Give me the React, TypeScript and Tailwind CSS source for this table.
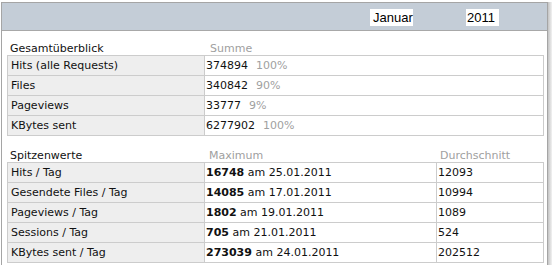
const font = { fontFamily: '"DejaVu Sans", Verdana, sans-serif' }

const gesamt = [
  { label: 'Hits (alle Requests)', value: '374894', pct: '100%' },
  { label: 'Files', value: '340842', pct: '90%' },
  { label: 'Pageviews', value: '33777', pct: '9%' },
  { label: 'KBytes sent', value: '6277902', pct: '100%' },
]

const spitzen = [
  { label: 'Hits / Tag', max: '16748', date: '25.01.2011', avg: '12093' },
  { label: 'Gesendete Files / Tag', max: '14085', date: '17.01.2011', avg: '10994' },
  { label: 'Pageviews / Tag', max: '1802', date: '19.01.2011', avg: '1089' },
  { label: 'Sessions / Tag', max: '705', date: '21.01.2011', avg: '524' },
  { label: 'KBytes sent / Tag', max: '273039', date: '24.01.2011', avg: '202512' },
]

export default function App() {
  return (
    <div className="flex h-[265px] w-[552px] overflow-hidden bg-white pl-[1px] pt-[2px]">
      <div className="h-full w-[547px] border-x border-t border-[#a5a5a5]">
        {/* header bar */}
        <div className="flex h-[28px] items-center border-b border-[#a8a8a8] bg-[#c4cdd7] pl-[368px] pt-[1px]">
          <div
            className="flex h-[17px] w-[43px] items-center bg-white pl-[3px] text-[13px] leading-none text-black"
            style={{ fontFamily: '"Liberation Sans", Arial, sans-serif' }}
          >
            Januar
          </div>
          <div
            className="ml-[53px] flex h-[17px] w-[33px] items-center bg-white pl-[1px] text-[13px] leading-none text-black"
            style={{ fontFamily: '"Liberation Sans", Arial, sans-serif' }}
          >
            2011
          </div>
        </div>

        <div className="pl-[5px] text-[11px] text-[#111]" style={font}>
          {/* Gesamtüberblick */}
          <div className="grid h-[24px] grid-cols-[198px_339px] items-end leading-[13px]">
            <div className="pl-[3px]">Gesamtüberblick</div>
            <div className="pl-[5px] text-[#a0a0a0]">Summe</div>
          </div>
          <div className="w-[537px] border-t border-[#cccccc]">
            {gesamt.map((r) => (
              <div key={r.label} className="grid h-[20px] grid-cols-[198px_339px] border-b border-[#cccccc] leading-[19px]">
                <div className="border-x border-[#cccccc] bg-[#eeeeee] pl-[3px]">{r.label}</div>
                <div className="border-r border-[#cccccc] pl-[1px]">
                  {r.value}
                  <span className="ml-[8px] text-[#a0a0a0]">{r.pct}</span>
                </div>
              </div>
            ))}
          </div>

          {/* Spitzenwerte */}
          <div className="grid h-[26px] grid-cols-[198px_232px_107px] items-end leading-[13px]">
            <div className="pl-[3px]">Spitzenwerte</div>
            <div className="pl-[4px] text-[#a0a0a0]">Maximum</div>
            <div className="pl-[3px] text-[#a0a0a0]">Durchschnitt</div>
          </div>
          <div className="w-[537px] border-t border-[#cccccc]">
            {spitzen.map((r) => (
              <div
                key={r.label}
                className="grid h-[20px] grid-cols-[198px_232px_107px] border-b border-[#cccccc] leading-[19px]"
              >
                <div className="border-x border-[#cccccc] bg-[#eeeeee] pl-[3px]">{r.label}</div>
                <div className="border-r border-[#cccccc] pl-[1px]">
                  <span className="font-bold">{r.max}</span> am {r.date}
                </div>
                <div className="border-r border-[#cccccc] pl-[1px]">{r.avg}</div>
              </div>
            ))}
          </div>
        </div>
      </div>
      <div className="h-full w-[4px] bg-linear-to-r from-[#c4c4c4] to-[#f2f2f2]" />
    </div>
  )
}
